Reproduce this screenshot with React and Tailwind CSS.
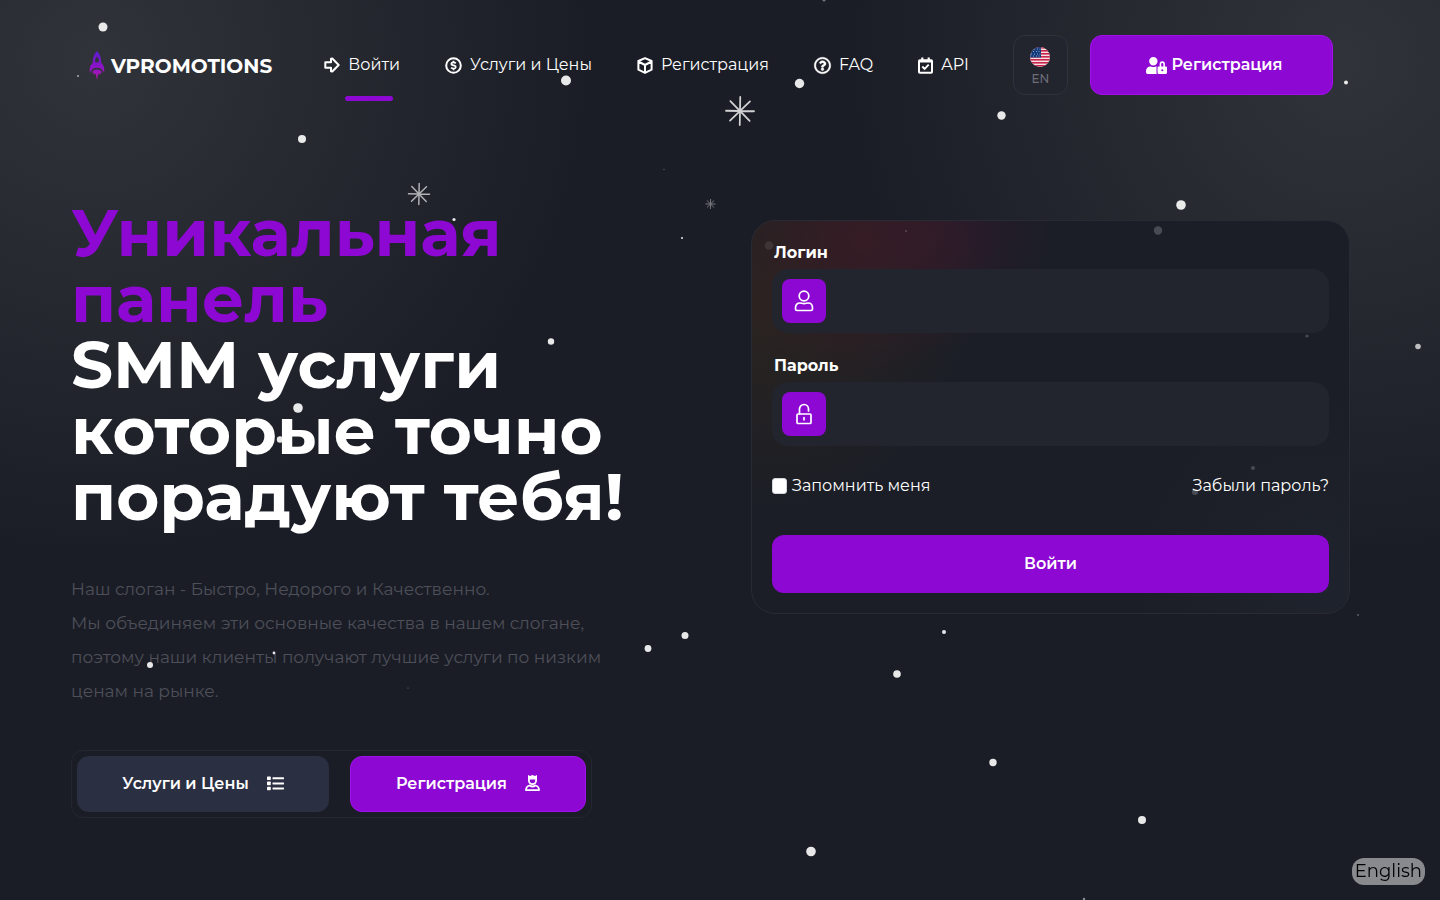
import React, { useState } from "react";
import { FaRegQuestionCircle, FaUserLock } from "react-icons/fa";

function ArrowIcon() {
  return (
    <svg width="16" height="16" viewBox="0 0 16 16" fill="none" stroke="currentColor" strokeWidth="2" strokeLinejoin="round" aria-hidden="true">
      <path d="M1.300 5.300H7V1.800L8.300 1.500L14.700 8L8.300 14.500L7 14.200V10.700H1.300Z" />
    </svg>
  );
}

function DollarIcon() {
  return (
    <svg width="17" height="17" viewBox="0 0 17 17" fill="none" stroke="currentColor" aria-hidden="true">
      <circle cx="8.500" cy="8.500" r="7.300" strokeWidth="2" />
      <path
        d="M10.800 6.200Q9.800 5.400 8.500 5.400C5.800 5.400 5.800 7.800 7.600 8.200L9.500 8.700C11.300 9.200 11.200 11.600 8.500 11.600Q7 11.600 6.100 10.700M8.500 3.700V5.500M8.500 11.500V13.300"
        strokeWidth="1.800"
      />
    </svg>
  );
}

function CubeIcon() {
  return (
    <svg width="16" height="17" viewBox="0 0 16 17" fill="none" stroke="currentColor" strokeWidth="2" strokeLinejoin="round" aria-hidden="true">
      <path d="M8 1.200L14.600 4V12.700L8 15.800L1.400 12.700V4ZM1.400 4.500L8 8L14.600 4.500M8 8V15.800" />
    </svg>
  );
}

function CalendarIcon() {
  return (
    <svg width="15" height="17" viewBox="0 0 15 17" fill="none" stroke="currentColor" strokeWidth="2" aria-hidden="true">
      <rect x="1" y="3.300" width="13" height="12.500" rx="0.800" />
      <path d="M1 4.500H14M4.300 0.500V4M10.700 0.500V4" strokeWidth="2.200" />
      <path d="M4.300 9.500L6.600 11.800L10.700 7.700" strokeWidth="1.900" />
    </svg>
  );
}

const navItems = [
  { label: "Войти", icon: <ArrowIcon />, active: true },
  { label: "Услуги и Цены", icon: <DollarIcon /> },
  { label: "Регистрация", icon: <CubeIcon /> },
  { label: "FAQ", icon: <FaRegQuestionCircle size={17} stroke="currentColor" strokeWidth={12} overflow="visible" /> },
  { label: "API", icon: <CalendarIcon /> },
];

// x, y, radius, opacity
const snow = [
  [103, 27, 4.5, 0.9], [78, 76, 1, 0.6], [302, 139, 4, 0.9], [566, 80.5, 5, 0.9],
  [799.5, 83.5, 4.7, 0.9], [1001.5, 115.5, 4.2, 0.9], [1346, 82.5, 2, 0.9], [1181, 205, 4.8, 0.9],
  [454, 219.5, 1.6, 0.9], [682, 238, 1, 0.9], [664, 169.5, 0.6, 0.4], [551, 341.5, 3.2, 0.9],
  [298, 408, 4.8, 0.9], [280, 439.5, 3.2, 0.9], [545, 449, 2.2, 0.9], [1418, 346.5, 2.8, 0.7],
  [685, 635.5, 3.5, 0.9], [648, 648.5, 3.4, 0.9], [944, 632, 2, 0.9], [897, 674, 3.8, 0.9],
  [150, 665, 3, 0.9], [274, 653, 1.4, 0.9], [408, 688, 0.6, 0.4], [993, 762.5, 3.7, 0.9],
  [1142, 820, 4, 0.9], [811, 851.5, 4.8, 0.9], [1358, 615, 0.7, 0.6], [824, 0, 1.5, 0.4],
  [1084, 899, 1.2, 0.5], [769, 245.5, 4.3, 0.09], [906, 231, 1, 0.2], [1158, 230.5, 4.2, 0.2],
  [1307, 336, 1.6, 0.2], [1253, 468, 2, 0.2], [1195, 492, 3, 0.2],
];

// x, y, arm length, opacity
const flakes = [
  [740, 111, 14, 0.8],
  [419, 194, 10.5, 0.65],
  [710.5, 204, 4.6, 0.4],
];

function Snow() {
  return (
    <svg className="pointer-events-none absolute inset-0 h-full w-full" aria-hidden="true">
      {snow.map(([x, y, r, o]) => (
        <circle key={`${x}-${y}`} cx={x} cy={y} r={r} fill="#fff" opacity={o} />
      ))}
      {flakes.map(([x, y, r, o]) => (
        <g
          key={`${x}-${y}`}
          transform={`translate(${x} ${y}) rotate(1)`}
          stroke="#fff"
          strokeWidth={0.6 + r / 12}
          strokeLinecap="round"
          opacity={o}
        >
          <path d={`M${-r} 0H${r}M0 ${-r}V${r}`} />
          <path d={`M${-r * 0.7} ${-r * 0.7}L${r * 0.7} ${r * 0.7}M${-r * 0.7} ${r * 0.7}L${r * 0.7} ${-r * 0.7}`} />
          <circle r={r / 7} fill="#fff" stroke="none" />
        </g>
      ))}
    </svg>
  );
}

function Logo() {
  return (
    <a href="#" className="flex items-center gap-1.5">
      <svg width="16" height="29" viewBox="0 0 16 29" aria-hidden="true">
        <defs>
          <linearGradient id="rocket" x1="0" y1="0" x2="0" y2="1">
            <stop offset="0" stopColor="#5a1bd6" />
            <stop offset="0.6" stopColor="#9014c4" />
            <stop offset="1" stopColor="#b01a9c" />
          </linearGradient>
        </defs>
        <path
          fill="url(#rocket)"
          fillRule="evenodd"
          d="M8 0C5.300 3 3.400 7 3.800 12C1.500 14 .3 16 .8 22C3 18 5 16.800 8 16.800S13 18 15.200 22C15.700 16 14.500 14 12.200 12C12.600 7 10.700 3 8 0ZM8 5.500C9.200 7 10.200 8.600 10 10.500Q8 12.500 6 10.500C5.800 8.600 6.800 7 8 5.500ZM8 18.500C6 18.500 4.200 19.300 3 21L5.400 23.400L6.700 22.800L8 29L9.300 22.800L10.600 23.400L13 21C11.800 19.300 10 18.500 8 18.500Z"
        />
      </svg>
      <span className="pt-0.5 text-xl leading-7 font-bold text-white">VPROMOTIONS</span>
    </a>
  );
}

function FlagUs() {
  return (
    <svg width="20" height="20" viewBox="0 0 20 20" aria-hidden="true">
      <clipPath id="round">
        <circle cx="10" cy="10" r="10" />
      </clipPath>
      <g clipPath="url(#round)">
        <rect width="20" height="20" fill="#f6dfe3" />
        {[0, 3, 6, 9, 12, 15, 18].map((y) => (
          <rect key={y} y={y} width="20" height="1.6" fill="#c8234a" />
        ))}
        <rect width="11" height="10.5" fill="#123a7a" />
        {[2, 4.5, 7, 9].map((y, i) =>
          [1.5, 4.5, 7.5, 10].map((x) => (
            <circle key={`${x}-${y}`} cx={x - (i % 2)} cy={y} r="0.5" fill="#b9c8e6" />
          ))
        )}
      </g>
    </svg>
  );
}

function UserIcon() {
  return (
    <svg width="20" height="22" viewBox="0 0 20 22" fill="none" stroke="#fff" strokeWidth="1.700" aria-hidden="true">
      <circle cx="10" cy="6" r="4.800" />
      <path d="M6 13C3 13 1.500 15 1.500 18V19Q1.500 20.500 3 20.500H17Q18.500 20.500 18.500 19V18C18.500 15 17 13 14 13C12.500 13 12 13.700 10 13.700S7.500 13 6 13Z" />
    </svg>
  );
}

function UnlockIcon() {
  return (
    <svg width="18" height="22" viewBox="0 0 18 22" fill="none" stroke="#fff" strokeWidth="1.700" strokeLinecap="round" aria-hidden="true">
      <rect x="2" y="11" width="14" height="9.500" rx="1" />
      <path d="M4.500 11V6A4.500 4.500 0 0 1 13.500 6V8M9 14.500V16.800" />
    </svg>
  );
}

function ListIcon() {
  return (
    <svg width="17" height="16" viewBox="0 0 17 16" fill="#fff" aria-hidden="true">
      {[0.5, 5.6, 10.7].map((y) => (
        <g key={y}>
          <rect y={y} width="3.8" height="3.6" rx="0.7" />
          <rect x="5.500" y={y + 0.8} width="11.5" height="2" rx="0.4" />
        </g>
      ))}
    </svg>
  );
}

function CrownUserIcon() {
  return (
    <svg width="15" height="18" viewBox="0 0 15 18" fill="none" stroke="#fff" strokeWidth="1.800" aria-hidden="true">
      <path d="M3.900 3.500V5.500A3.600 3.600 0 0 0 11.100 5.500V3.500" />
      <path d="M3 0L5 1L7.500 0L10 1L12 0V4.500H3Z" fill="#fff" stroke="none" />
      <path d="M4.500 10.500C2 11.200 1 12.500 1 15.200H14C14 12.500 13 11.200 10.500 10.500Q7.500 12.500 4.500 10.500Z" strokeLinejoin="round" />
    </svg>
  );
}

function Field({ id, label, type, icon, value, onChange }) {
  return (
    <div>
      <label htmlFor={id} className="block pl-0.5 text-base leading-6 font-bold text-white">
        {label}
      </label>
      <div className="mt-1 flex h-16 items-center rounded-2xl bg-[#23252e] px-2.5">
        <span className="flex h-11 w-11 items-center justify-center rounded-lg bg-[#8d08d2]">{icon}</span>
        <input
          id={id}
          type={type}
          value={value}
          onChange={onChange}
          className="h-full min-w-0 flex-1 bg-transparent px-4 text-base text-white outline-none"
        />
      </div>
    </div>
  );
}

function LoginForm() {
  const [login, setLogin] = useState("");
  const [password, setPassword] = useState("");
  const [remember, setRemember] = useState(false);

  return (
    <form
      onSubmit={(e) => e.preventDefault()}
      className="rounded-3xl border border-[#292b34] bg-[#1b1e26] bg-[radial-gradient(circle_at_95%_92%,#1f232d_0,transparent_180px),radial-gradient(circle_at_110px_20px,#361c25_0,transparent_140px),radial-gradient(circle_at_180px_10px,#2c1a2c_0,transparent_120px),radial-gradient(circle_at_10px_80px,#2b2420_0,transparent_210px)] p-5"
    >
      <div className="flex flex-col gap-[21px]">
        <Field
          id="login"
          label="Логин"
          type="text"
          icon={<UserIcon />}
          value={login}
          onChange={(e) => setLogin(e.target.value)}
        />
        <Field
          id="password"
          label="Пароль"
          type="password"
          icon={<UnlockIcon />}
          value={password}
          onChange={(e) => setPassword(e.target.value)}
        />
      </div>

      <div className="mt-7 flex items-center justify-between text-base leading-6 text-white">
        <label className="flex items-center gap-[5px]">
          <input
            type="checkbox"
            checked={remember}
            onChange={(e) => setRemember(e.target.checked)}
            className="h-4 w-[15px] appearance-none rounded-[3px] border border-gray-300 bg-white checked:bg-[#8d08d2]"
          />
          Запомнить меня
        </label>
        <a href="#">Забыли пароль?</a>
      </div>

      <button type="submit" className="mt-[37px] h-[58px] w-full rounded-xl bg-[#8d08d2] text-base font-semibold text-white">
        Войти
      </button>
    </form>
  );
}

export default function App() {
  return (
    <div className="relative min-h-screen overflow-hidden bg-[#1b1d26] bg-[radial-gradient(circle_at_95px_60px,#31333a_0,transparent_500px),radial-gradient(circle_at_calc(100%-95px)_60px,#31333a_0,transparent_500px)] pr-[70px] pb-20 pl-[71px] font-['Montserrat','Inter',sans-serif]">
      <div className="mx-auto max-w-[1299px]">
        <header className="flex h-[130px] items-center justify-between pr-[37px] pl-[18px]">
          <Logo />
          <nav className="flex items-center gap-[45px] pl-2">
            {navItems.map((item) => (
              <a key={item.label} href="#" className="relative flex items-center gap-2 text-base leading-6 text-white">
                {item.icon}
                {item.label}
                {item.active && (
                  <span className="absolute top-11 left-[21px] -mt-px h-[5px] w-12 rounded-full bg-[#8d08d2]" />
                )}
              </a>
            ))}
          </nav>
          <div className="flex gap-[22px]">
            <button
              type="button"
              className="flex h-[60px] w-[55px] flex-col items-center justify-center gap-1 rounded-xl border border-[#30323d] bg-[#22242e] pt-1 text-xs leading-4 font-medium text-[#6c6d76]"
            >
              <FlagUs />
              EN
            </button>
            <a
              href="#"
              className="flex h-[60px] w-[243px] items-center justify-center gap-1 rounded-xl border border-[#a010ea] bg-[#8d08d2] pl-1.5 text-base font-semibold text-white"
            >
              <FaUserLock size={21} />
              Регистрация
            </a>
          </div>
        </header>

        <main className="grid grid-cols-2 gap-[21px] pt-[70px]">
          <section>
            <h1 className="text-[66px] leading-[66px] font-bold text-white">
              <span className="text-[#8d08d2]">
                Уникальная
                <br />
                панель
              </span>
              <br />
              SMM услуги
              <br />
              которые точно
              <br />
              порадуют тебя!
            </h1>
            <p className="mt-[42px] text-[17px] leading-[34px] text-[#4d4f59]">
              Наш слоган - Быстро, Недорого и Качественно.
              <br />
              Мы объединяем эти основные качества в нашем слогане,
              <br />
              поэтому наши клиенты получают лучшие услуги по низким
              <br />
              ценам на рынке.
            </p>
            <div className="mt-[42px] inline-flex gap-[21px] rounded-xl border border-[#25272f] p-[5px] text-base font-semibold text-white">
              <a href="#" className="flex h-14 w-[252px] items-center justify-center gap-[18px] rounded-xl bg-[#2b2f42]">
                Услуги и Цены
                <ListIcon />
              </a>
              <a
                href="#"
                className="flex h-14 w-[236px] items-center justify-center gap-[18px] rounded-xl border border-[#a010ea] bg-[#8d08d2]"
              >
                Регистрация
                <CrownUserIcon />
              </a>
            </div>
          </section>
          <section className="px-5 pt-5">
            <LoginForm />
          </section>
        </main>
      </div>

      <Snow />
      <button
        type="button"
        className="fixed right-[15px] bottom-[15px] rounded-xl bg-[#898a8e] px-[3px] text-lg leading-[27px] text-black"
      >
        English
      </button>
    </div>
  );
}
